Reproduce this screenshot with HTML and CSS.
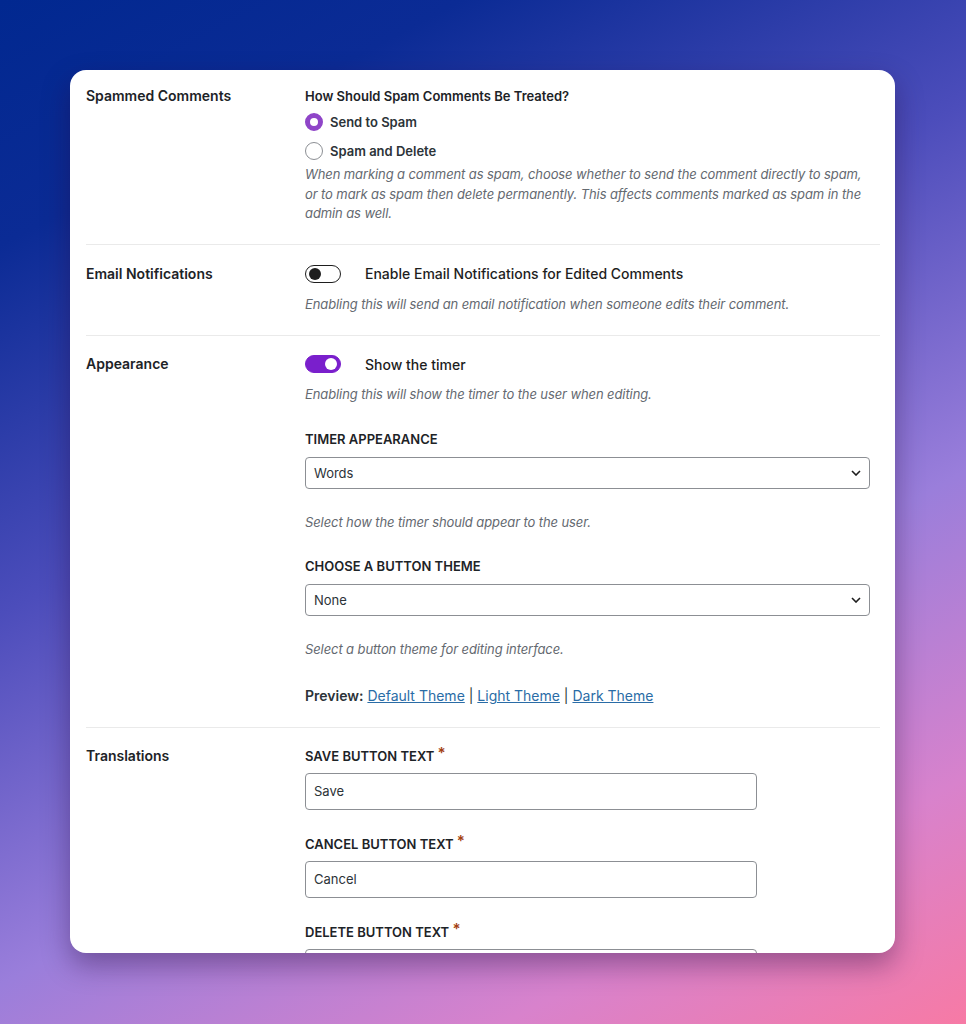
FILE: index.html
```html
<!DOCTYPE html>
<html lang="en">
<head>
<meta charset="UTF-8">
<title>Comment Edit Settings</title>
<link rel="stylesheet" href="styles.css">
</head>
<body>

<div class="card">

    <div class="row">
        <div class="row-label">Spammed Comments</div>
        <div class="row-body">
            <div class="question">How Should Spam Comments Be Treated?</div>
            <label class="radio-line">
                <span class="radio checked"></span>
                <span>Send to Spam</span>
            </label>
            <label class="radio-line">
                <span class="radio"></span>
                <span>Spam and Delete</span>
            </label>
            <p class="desc first">When marking a comment as spam, choose whether to send the comment directly to spam, or to mark as spam then delete permanently. This affects comments marked as spam in the admin as well.</p>
        </div>
    </div>

    <div class="row">
        <div class="row-label">Email Notifications</div>
        <div class="row-body">
            <div class="toggle-line">
                <span class="toggle"><span class="knob"></span></span>
                <span>Enable Email Notifications for Edited Comments</span>
            </div>
            <p class="desc">Enabling this will send an email notification when someone edits their comment.</p>
        </div>
    </div>

    <div class="row">
        <div class="row-label">Appearance</div>
        <div class="row-body">
            <div class="toggle-line">
                <span class="toggle on"><span class="knob"></span></span>
                <span>Show the timer</span>
            </div>
            <p class="desc">Enabling this will show the timer to the user when editing.</p>

            <div class="field">
                <div class="field-label">Timer Appearance</div>
                <div class="select">
                    <span>Words</span>
                    <svg width="10" height="6" viewBox="0 0 10 6"><path d="M1 1l4 4 4-4" fill="none" stroke="#1e1e1e" stroke-width="1.6"/></svg>
                </div>
            </div>
            <p class="desc spaced">Select how the timer should appear to the user.</p>

            <div class="field">
                <div class="field-label">Choose a Button Theme</div>
                <div class="select">
                    <span>None</span>
                    <svg width="10" height="6" viewBox="0 0 10 6"><path d="M1 1l4 4 4-4" fill="none" stroke="#1e1e1e" stroke-width="1.6"/></svg>
                </div>
            </div>
            <p class="desc spaced">Select a button theme for editing interface.</p>

            <div class="preview">
                <b>Preview:</b> <a href="#">Default Theme</a> | <a href="#">Light Theme</a> | <a href="#">Dark Theme</a>
            </div>
        </div>
    </div>

    <div class="row">
        <div class="row-label">Translations</div>
        <div class="row-body">
            <div class="field top">
                <div class="field-label">Save Button Text <span class="req">*</span></div>
                <input class="text" type="text" value="Save">
            </div>
            <div class="field">
                <div class="field-label">Cancel Button Text <span class="req">*</span></div>
                <input class="text" type="text" value="Cancel">
            </div>
            <div class="field">
                <div class="field-label">Delete Button Text <span class="req">*</span></div>
                <input class="text" type="text" value="Delete">
            </div>
        </div>
    </div>

</div>

</body>
</html>
```

FILE: styles.css
```css
body {
    margin: 0;
    height: 1024px;
    overflow: hidden;
    font-family: Inter, "Noto Sans", sans-serif;
    color: #1e1e1e;
    background: linear-gradient(152deg, #012890 0%, #0b2b95 16%, #4c4dbb 40%, #9a7edb 64%, #d882cc 84%, #f77aa5 100%);
}
.card {
    margin: 70px 0 0 70px;
    width: 825px;
    height: 883px;
    box-sizing: border-box;
    padding: 0 15px 0 16px;
    background: #fff;
    border-radius: 16px;
    overflow: hidden;
    box-shadow: 0 12px 28px rgba(40,10,60,.4);
}
.row {
    display: grid;
    grid-template-columns: 219px 1fr;
    padding: 18px 0 21px;
    border-bottom: 1px solid #eaeaea;
}
.row:first-child {
    padding-top: 16px;
    padding-bottom: 20px;
}
.row:nth-child(2) {
    padding-top: 19px;
}
.row:last-child {
    border-bottom: none;
}
.row-label {
    font-size: 14px;
    font-weight: 600;
    line-height: 20px;
    color: #1d2327;
}
.row-body {
    padding-right: 10px;
}
.question {
    font-size: 13px;
    font-weight: 600;
    line-height: 21px;
    color: #1d2327;
}
.radio-line {
    display: flex;
    align-items: center;
    gap: 7px;
    height: 29px;
    font-size: 13px;
    font-weight: 600;
    color: #2c3338;
}
.radio {
    width: 18px;
    height: 18px;
    box-sizing: border-box;
    border: 1px solid #8c8f94;
    border-radius: 50%;
    background: #fff;
}
.radio.checked {
    border: 5px solid #8f45c8;
}
.desc {
    margin: 11px 0 0;
    font-size: 13px;
    font-style: italic;
    line-height: 19.5px;
    color: #646970;
    letter-spacing: -0.1px;
}
.desc.first {
    margin-top: 0;
}
.desc.spaced {
    margin-top: 24px;
}
.toggle-line {
    display: flex;
    align-items: center;
    gap: 24px;
    height: 20px;
    font-size: 14px;
    font-weight: 500;
    color: #1e1e1e;
}
.toggle {
    display: flex;
    align-items: center;
    width: 36px;
    height: 18px;
    box-sizing: border-box;
    padding: 0 3px;
    border: 1px solid #1e1e1e;
    border-radius: 9px;
    background: #fff;
}
.toggle .knob {
    width: 12px;
    height: 12px;
    border-radius: 50%;
    background: #1e1e1e;
}
.toggle.on {
    border-color: #7a1fcc;
    background: #7a1fcc;
    justify-content: flex-end;
}
.toggle.on .knob {
    background: #fff;
}
.field {
    margin-top: 24px;
}
.field.top {
    margin-top: 0;
}
.field-label {
    height: 20px;
    font-size: 13px;
    font-weight: 600;
    line-height: 20px;
    text-transform: uppercase;
    color: #1d2327;
    margin-bottom: 8px;
}
.req {
    color: #a3400f;
    font-size: 15px;
    line-height: 0;
    vertical-align: 3px;
}
.select {
    display: flex;
    align-items: center;
    justify-content: space-between;
    height: 32px;
    box-sizing: border-box;
    padding: 0 8px;
    border: 1px solid #8c8f94;
    border-radius: 4px;
    font-size: 13px;
    color: #2c3338;
}
.text {
    display: block;
    width: 452px;
    height: 37px;
    box-sizing: border-box;
    margin-top: -1px;
    padding: 0 8px;
    border: 1px solid #8c8f94;
    border-radius: 4px;
    font-family: Inter, "Noto Sans", sans-serif;
    font-size: 13px;
    color: #2c3338;
}
.preview {
    margin-top: 26px;
    font-size: 14px;
    line-height: 20px;
    color: #2c3338;
}
.preview b {
    font-weight: 600;
}
.preview a {
    color: #2a6ca6;
}
```
